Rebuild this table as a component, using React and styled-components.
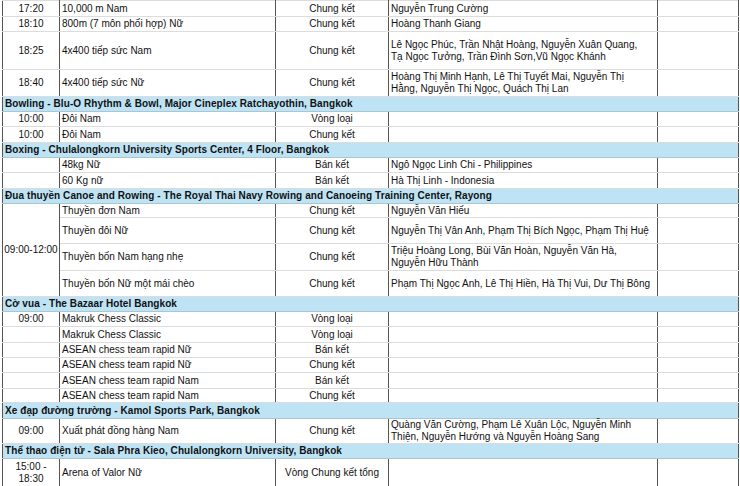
import React from 'react';
import styled, {createGlobalStyle} from 'styled-components';

const GlobalStyle = createGlobalStyle`
  html, body {
    margin: 0;
    padding: 0;
    background: #fff;
  }
  body {
    font-family: "Liberation Sans", Arial, sans-serif;
    font-size: 10px;
    color: #111;
    overflow: hidden;
  }
`;

const Sheet = styled.div`
  width: 740px;
  height: 486px;
  overflow: hidden;
  padding-left: 2px;
  box-sizing: border-box;
`;

const Table = styled.table`
  width: 736px;
  table-layout: fixed;
  border-collapse: collapse;
  border-left: 1px solid #555;
  border-right: 1px solid #555;
`;

const Row = styled.tr`
  height: ${props => props.$h}px;
`;

const Cell = styled.td`
  box-sizing: border-box;
  padding: 0 2px;
  line-height: 12px;
  vertical-align: middle;
  white-space: nowrap;
  overflow: visible;
  border-top: 1px solid #dcdcdc;
  border-bottom: 1px solid #dcdcdc;
  border-left: 1px solid #555;
  border-right: 1px solid #555;
  text-align: ${props => props.$align || 'left'};
`;

const TimeCell = styled(Cell)`
  text-align: center;
  padding: 0 1px;
  white-space: ${props => (props.$wrap ? 'normal' : 'nowrap')};
`;

const HeaderCell = styled.td`
  background: #bee3f4;
  font-weight: bold;
  letter-spacing: 0.08px;
  padding: 0 2px;
  white-space: nowrap;
  border-top: 1px solid #666;
  border-bottom: 1px solid #a9c6d3;
  line-height: 12px;
`;

const sections = [
  {
    title: null,
    rows: [
      {h: 16, time: '17:20', event: '10,000 m Nam', round: 'Chung kết', who: ['Nguyễn Trung Cường']},
      {h: 15, time: '18:10', event: '800m (7 môn phối hợp) Nữ', round: 'Chung kết', who: ['Hoàng Thanh Giang']},
      {
        h: 38,
        time: '18:25',
        event: '4x400 tiếp sức Nam',
        round: 'Chung kết',
        who: ['Lê Ngọc Phúc, Trần Nhật Hoàng, Nguyễn Xuân Quang,', 'Tạ Ngọc Tưởng, Trần Đình Sơn,Vũ Ngọc Khánh'],
      },
      {
        h: 27,
        time: '18:40',
        event: '4x400 tiếp sức Nữ',
        round: 'Chung kết',
        who: ['Hoàng Thị Minh Hạnh, Lê Thị Tuyết Mai, Nguyễn Thị', 'Hằng, Nguyễn Thị Ngọc, Quách Thị Lan'],
      },
    ],
  },
  {
    title: 'Bowling - Blu-O Rhythm & Bowl, Major Cineplex Ratchayothin, Bangkok',
    h: 15,
    rows: [
      {h: 15, time: '10:00', event: 'Đôi Nam', round: 'Vòng loại'},
      {h: 16, time: '10:00', event: 'Đôi Nam', round: 'Chung kết'},
    ],
  },
  {
    title: 'Boxing - Chulalongkorn University Sports Center, 4 Floor, Bangkok',
    h: 15,
    rows: [
      {h: 15, time: '', event: '48kg Nữ', round: 'Bán kết', who: ['Ngô Ngọc Linh Chi - Philippines']},
      {h: 16, time: '', event: '60 Kg nữ', round: 'Bán kết', who: ['Hà Thị Linh - Indonesia']},
    ],
  },
  {
    title: 'Đua thuyền Canoe and Rowing - The Royal Thai Navy Rowing and Canoeing Training Center, Rayong',
    h: 15,
    mergedTime: '09:00-12:00',
    rows: [
      {h: 14, event: 'Thuyền đơn Nam', round: 'Chung kết', who: ['Nguyễn Văn Hiếu']},
      {h: 26, event: 'Thuyền đôi Nữ', round: 'Chung kết', who: ['Nguyễn Thị Vân Anh, Phạm Thị Bích Ngọc, Phạm Thị Huệ']},
      {
        h: 27,
        event: 'Thuyền bốn Nam hạng nhẹ',
        round: 'Chung kết',
        who: ['Triệu Hoàng Long, Bùi Văn Hoàn, Nguyễn Văn Hà,', 'Nguyễn Hữu Thành'],
      },
      {h: 26, event: 'Thuyền bốn Nữ một mái chèo', round: 'Chung kết', who: ['Phạm Thị Ngọc Anh, Lê Thị Hiền, Hà Thị Vui, Dư Thị Bông']},
    ],
  },
  {
    title: 'Cờ vua - The Bazaar Hotel Bangkok',
    h: 15,
    rows: [
      {h: 15, time: '09:00', event: 'Makruk Chess Classic', round: 'Vòng loại'},
      {h: 16, time: '', event: 'Makruk Chess Classic', round: 'Vòng loại'},
      {h: 15, time: '', event: 'ASEAN chess team rapid Nữ', round: 'Bán kết'},
      {h: 15, time: '', event: 'ASEAN chess team rapid Nữ', round: 'Chung kết'},
      {h: 16, time: '', event: 'ASEAN chess team rapid Nam', round: 'Bán kết'},
      {h: 14, time: '', event: 'ASEAN chess team rapid Nam', round: 'Chung kết'},
    ],
  },
  {
    title: 'Xe đạp đường trường - Kamol Sports Park, Bangkok',
    h: 16,
    rows: [
      {
        h: 25,
        time: '09:00',
        event: 'Xuất phát đồng hàng Nam',
        round: 'Chung kết',
        who: ['Quàng Văn Cường, Phạm Lê Xuân Lộc, Nguyễn Minh', 'Thiện, Nguyễn Hướng và Nguyễn Hoàng Sang'],
      },
    ],
  },
  {
    title: 'Thể thao điện tử - Sala Phra Kieo, Chulalongkorn University, Bangkok',
    h: 15,
    rows: [
      {h: 28, time: '15:00 - 18:30', wrap: true, event: 'Arena of Valor Nữ', round: 'Vòng Chung kết tổng'},
    ],
  },
];

function Lines({items}) {
  if (!items) return null;
  return items.map((line, i) => (
    <React.Fragment key={i}>
      {i > 0 && <br />}
      {line}
    </React.Fragment>
  ));
}

export default function App() {
  return (
    <Sheet>
      <GlobalStyle />
      <Table>
        <colgroup>
          <col style={{width: 57}} />
          <col style={{width: 216}} />
          <col style={{width: 113}} />
          <col style={{width: 269}} />
          <col style={{width: 81}} />
        </colgroup>
        <tbody>
          {sections.map((section, si) => (
            <React.Fragment key={si}>
              {section.title && (
                <Row $h={section.h}>
                  <HeaderCell colSpan={5}>{section.title}</HeaderCell>
                </Row>
              )}
              {section.rows.map((row, ri) => (
                <Row $h={row.h} key={ri}>
                  {section.mergedTime ? (
                    ri === 0 && (
                      <TimeCell rowSpan={section.rows.length}>{section.mergedTime}</TimeCell>
                    )
                  ) : (
                    <TimeCell $wrap={row.wrap}>{row.time}</TimeCell>
                  )}
                  <Cell>{row.event}</Cell>
                  <Cell $align="center">{row.round}</Cell>
                  <Cell>
                    <Lines items={row.who} />
                  </Cell>
                  <Cell />
                </Row>
              ))}
            </React.Fragment>
          ))}
        </tbody>
      </Table>
    </Sheet>
  );
}
